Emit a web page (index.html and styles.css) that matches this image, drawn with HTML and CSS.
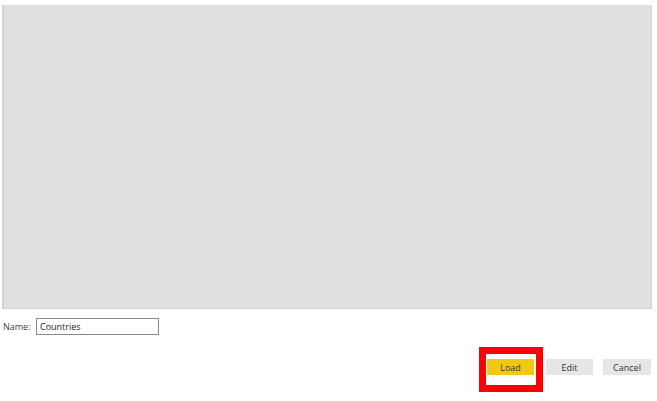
FILE: index.html
```html
<!DOCTYPE html>
<html lang="en">
<head>
  <meta charset="UTF-8">
  <meta name="viewport" content="width=device-width, initial-scale=1.0">
  <title>Load query</title>
  <link rel="stylesheet" href="styles.css">
</head>
<body>
  <div class="preview"></div>

  <div class="name-row">
    <label class="name-label" for="query-name">Name:</label>
    <input id="query-name" class="name-input" type="text" value="Countries">
  </div>

  <div class="button-row">
    <div class="highlight">
      <button class="dialog-button load-button">Load</button>
    </div>
    <button class="dialog-button">Edit</button>
    <button class="dialog-button cancel-button">Cancel</button>
  </div>
</body>
</html>
```

FILE: styles.css
```css
body {
  margin: 0;
  padding-bottom: 26px;
  background: #ffffff;
  font-family: "Open Sans", "Noto Sans", sans-serif;
  color: #333333;
}

.preview {
  margin: 5px 0 0 2px;
  width: 650px;
  height: 304px;
  box-sizing: border-box;
  background: #e0e0e0;
  border-left: 2px solid #d2d2d2;
  border-right: 1px solid #d6d6d6;
  border-bottom: 1px solid #d2d2d2;
}

.name-row {
  display: flex;
  align-items: center;
  margin-top: 9px;
  padding-left: 3px;
  height: 17px;
}

.name-label {
  font-size: 9px;
  width: 33px;
  color: #444444;
}

.name-input {
  width: 123px;
  height: 17px;
  box-sizing: border-box;
  border: 1px solid #8a8a8a;
  padding: 0 0 0 3px;
  font-family: "Open Sans", "Noto Sans", sans-serif;
  font-size: 9px;
  color: #222222;
  outline: none;
}

.button-row {
  display: flex;
  align-items: flex-start;
  justify-content: flex-end;
  gap: 10px;
  margin-top: 24px;
  width: 651px;
}

/* red annotation frame round the Load button */
.highlight {
  display: flex;
  border: 7px solid #ff0000;
  padding: 5px 2px 10px 1px;
  margin: -12px -7px -17px -8px;
}

.dialog-button {
  width: 47px;
  height: 16px;
  border: none;
  padding: 0;
  background: #e6e6e6;
  font-family: "Open Sans", "Noto Sans", sans-serif;
  font-size: 9px;
  color: #333333;
}

.load-button {
  background: #f2c811;
}

.cancel-button {
  width: 48px;
}
```
